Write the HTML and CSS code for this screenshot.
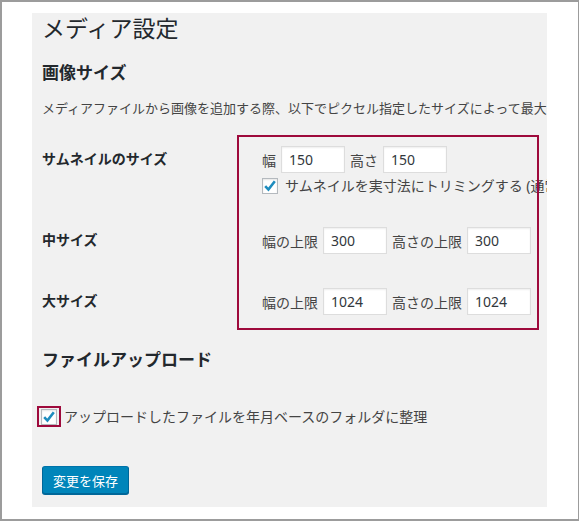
FILE: index.html
```html
<!DOCTYPE html>
<html lang="ja">
<head>
<meta charset="utf-8">
<title>メディア設定</title>
<link rel="stylesheet" href="styles.css">
</head>
<body>
<div class="frame">
  <div class="panel">
    <h1 class="title">メディア設定</h1>
    <h2 class="section section-first">画像サイズ</h2>
    <p class="desc">メディアファイルから画像を追加する際、以下でピクセル指定したサイズによって最大の大きさが決まります。</p>

    <div class="form-table">
      <div class="row row-thumb">
        <div class="th">サムネイルのサイズ</div>
        <div class="td">
          <div class="fields">
            <span class="lbl">幅</span><span class="input">150</span>
            <span class="lbl">高さ</span><span class="input">150</span>
          </div>
          <div class="check-line">
            <span class="cb"><svg viewBox="0 0 16 16" width="16" height="16"><path d="M3.2 8.2 L6.4 11.6 L12.8 3.2" fill="none" stroke="#1e8cbe" stroke-width="2.6" stroke-linejoin="miter"/></svg></span>
            <span class="cb-text">サムネイルを実寸法にトリミングする (通常は相対的な縮小によってサムネイルを作ります)</span>
          </div>
        </div>
      </div>
      <div class="row row-medium">
        <div class="th">中サイズ</div>
        <div class="td">
          <div class="fields">
            <span class="lbl">幅の上限</span><span class="input">300</span>
            <span class="lbl">高さの上限</span><span class="input">300</span>
          </div>
        </div>
      </div>
      <div class="row row-large">
        <div class="th">大サイズ</div>
        <div class="td">
          <div class="fields">
            <span class="lbl">幅の上限</span><span class="input">1024</span>
            <span class="lbl">高さの上限</span><span class="input">1024</span>
          </div>
        </div>
      </div>
      <div class="highlight"></div>
    </div>

    <h2 class="section section-upload">ファイルアップロード</h2>
    <div class="upload-line">
      <span class="cb-mark"><span class="cb"><svg viewBox="0 0 16 16" width="16" height="16"><path d="M3.2 8.2 L6.4 11.6 L12.8 3.2" fill="none" stroke="#1e8cbe" stroke-width="2.6" stroke-linejoin="miter"/></svg></span></span>
      <span class="cb-text">アップロードしたファイルを年月ベースのフォルダに整理</span>
    </div>

    <div class="submit"><span class="button">変更を保存</span></div>
  </div>
</div>
</body>
</html>
```

FILE: styles.css
```css
* { box-sizing: border-box; }

html, body {
  margin: 0;
  padding: 0;
  background: #ffffff;
}

body {
  font-family: "Noto Sans", "Noto Sans CJK JP", sans-serif;
  color: #444444;
  font-size: 13px;
}

.frame {
  width: 579px;
  height: 521px;
  border: 2px solid #9c9c9c;
  border-right-width: 1px;
  padding: 11px 0 0 30px;
  background: #ffffff;
}

.panel {
  position: relative;
  width: 515px;
  height: 494px;
  background: #f1f1f1;
  overflow: hidden;
  padding: 0 0 0 10px;
}

.title {
  margin: 0;
  font-size: 23px;
  line-height: 30px;
  font-weight: 400;
  color: #23282d;
  white-space: nowrap;
}

.section {
  margin: 0;
  font-size: 17px;
  line-height: 24px;
  font-weight: 700;
  color: #23282d;
  white-space: nowrap;
}

.section-first { margin-top: 18px; }
.section-upload { margin-top: 33px; }

.desc {
  margin: 13px 0 0;
  font-size: 13px;
  line-height: 20px;
  white-space: nowrap;
  color: #444444;
}

.form-table {
  position: relative;
  margin-top: 28px;
  margin-left: -10px;
  padding-left: 10px;
}

.row {
  display: grid;
  grid-template-columns: 220px auto;
  align-items: start;
}

.row-medium { margin-top: 31px; }
.row-large { margin-top: 34px; }

.th {
  font-size: 14px;
  font-weight: 700;
  line-height: 25px;
  color: #23282d;
  white-space: nowrap;
}

.td { white-space: nowrap; }

.fields {
  display: flex;
  align-items: center;
  gap: 5px;
  height: 27px;
}

.lbl {
  font-size: 14px;
  color: #444444;
}

.input {
  display: inline-flex;
  align-items: center;
  width: 64px;
  height: 27px;
  padding: 0 7px;
  background: #ffffff;
  border: 1px solid #dddddd;
  box-shadow: inset 0 1px 2px rgba(0, 0, 0, 0.07);
  font-size: 14px;
  color: #32373c;
}

.check-line {
  display: flex;
  align-items: center;
  gap: 7px;
  margin-top: 3px;
  height: 20px;
}

.cb {
  display: inline-block;
  width: 16px;
  height: 16px;
  flex: none;
  background: #ffffff;
  border: 1px solid #b4b9be;
  box-shadow: inset 0 1px 2px rgba(0, 0, 0, 0.1);
  position: relative;
}

.cb svg {
  position: absolute;
  left: -1px;
  top: -1px;
}

.cb-text {
  font-size: 14px;
  line-height: 20px;
  color: #444444;
  white-space: nowrap;
}

.highlight {
  position: absolute;
  left: 205px;
  top: -11px;
  width: 302px;
  height: 195px;
  border: 2px solid #9e0a3c;
  pointer-events: none;
}

.upload-line {
  display: flex;
  align-items: center;
  gap: 3px;
  margin-top: 34px;
  margin-left: -5px;
  height: 21px;
}

.cb-mark {
  display: inline-flex;
  align-items: center;
  height: 21px;
  padding: 0 2px;
  border: 2px solid #9e0a3c;
}

.submit {
  margin-top: 39px;
}

.button {
  display: inline-flex;
  align-items: center;
  justify-content: center;
  height: 28px;
  padding: 0 10px;
  background: #0085ba;
  border: 1px solid;
  border-color: #0073aa #006799 #006799;
  border-radius: 3px;
  box-shadow: 0 1px 0 #006799;
  color: #ffffff;
  font-size: 13px;
  white-space: nowrap;
}
```
